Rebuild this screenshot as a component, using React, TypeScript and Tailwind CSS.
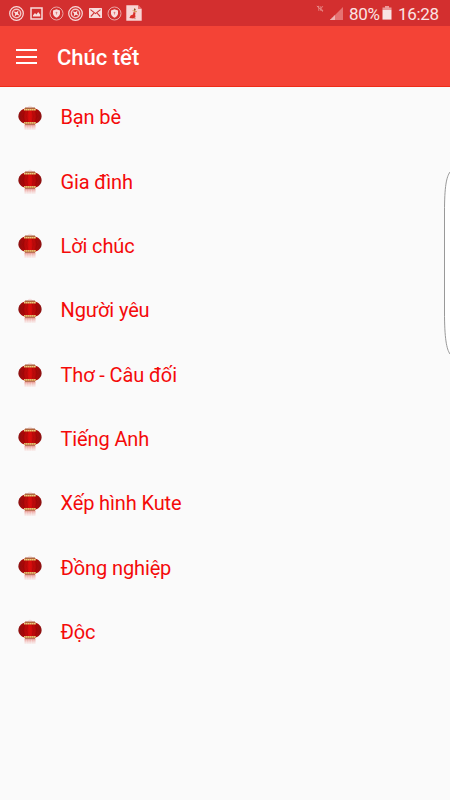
import React from 'react';

interface IconProps {
  className?: string;
}

const CATEGORIES = [
  'Bạn bè',
  'Gia đình',
  'Lời chúc',
  'Người yêu',
  'Thơ - Câu đối',
  'Tiếng Anh',
  'Xếp hình Kute',
  'Đồng nghiệp',
  'Độc',
];

const CompassIcon: React.FC<IconProps> = ({ className }) => (
  <svg viewBox="0 0 15 15" className={className} fill="none">
    <circle cx="7.5" cy="7.5" r="6.8" stroke="#f8dcdc" strokeWidth="1.2" />
    <circle cx="7.5" cy="7.5" r="4.2" stroke="#f3c4c4" strokeWidth="1.5" />
    <path d="M4.6 5.6 7.6 6 9.4 4.4 9 7.2 10.8 9.8 7.8 8.8 5.6 10.4 6.2 7.8Z" fill="#f8dcdc" />
  </svg>
);

const ShieldIcon: React.FC<IconProps> = ({ className }) => (
  <svg viewBox="0 0 15 15" className={className} fill="none">
    <circle cx="7.5" cy="7.5" r="6.5" stroke="#eba5a5" strokeWidth="1" />
    <path d="M7.5 3.3 11 4.4V7.2C11 9.4 9.4 10.8 7.5 11.8 5.6 10.8 4 9.4 4 7.2V4.4Z" fill="#f8dcdc" />
    <circle cx="7.5" cy="6.6" r="0.9" fill="#e07878" />
    <path d="M7.5 6.9V8.6" stroke="#e07878" strokeWidth="0.8" />
  </svg>
);

const PictureIcon: React.FC<IconProps> = ({ className }) => (
  <svg viewBox="0 0 13 13" className={className} fill="none">
    <rect x="1" y="1" width="11" height="11" stroke="#f8dcdc" strokeWidth="1.5" />
    <path d="M3 9.4V8.2L5 6 6.4 7.4 8.2 5 10.2 7.6V9.4Z" fill="#f8dcdc" />
  </svg>
);

const MailIcon: React.FC<IconProps> = ({ className }) => (
  <svg viewBox="0 0 13 10" className={className} fill="none">
    <rect width="13" height="10" rx="0.6" fill="#f8dcdc" />
    <path d="M1.5 1.6 6.5 5.6 11.5 1.6M1.8 8.5 4.9 5.2M11.2 8.5 8.1 5.2" stroke="#cf3535" strokeWidth="1.1" />
  </svg>
);

const NoteIcon: React.FC<IconProps> = ({ className }) => (
  <svg viewBox="0 0 16 16" className={className} fill="none">
    <path d="M0.3 0.3H12L15.7 4V15.7H0.3Z" fill="#f8d4d4" />
    <path d="M12 0.3V4H15.7Z" fill="#e57373" />
    <path d="M7.5 7 9.6 7.4 9.2 9.4 9.5 12.2 7.2 13.4 3.4 13 4.6 10.6 7 9.4Z" fill="#d8302a" />
    <path d="M8.6 3V7.2M6.6 5.6 11 6.8" stroke="#d79a5b" strokeWidth="1" />
    <circle cx="8.8" cy="4.6" r="0.9" fill="#8a4a30" />
    <path d="M8.2 13.6H9.6" stroke="#a06a50" strokeWidth="0.7" />
  </svg>
);

const MutedIcon: React.FC<IconProps> = ({ className }) => (
  <svg viewBox="0 0 8 8" className={className} fill="none" stroke="#e88a88" strokeWidth="0.9">
    <path d="M0.8 1 7 6.6M2.8 0.8V5.8M4.8 1.2V5.8M6.8 1.2 5 3.5 7 6M1 1.5H2.8" />
  </svg>
);

const SignalIcon: React.FC<IconProps> = ({ className }) => (
  <svg viewBox="0 0 13 13" className={className}>
    <path d="M0 13 13 0V13Z" fill="#e57373" />
    <path d="M0 13 5 8V13Z" fill="#f8dcdc" />
    <path d="M2 10V13M4 8V13" stroke="#d65353" strokeWidth="0.6" />
  </svg>
);

const BatteryIcon: React.FC<IconProps> = ({ className }) => (
  <svg viewBox="0 0 10 14" className={className}>
    <path d="M3 0H7V1.4H9.5V3.6H0.5V1.4H3Z" fill="#ec9999" />
    <path d="M0.5 3.6H9.5V13.6H0.5Z" fill="#f8e4e4" />
  </svg>
);

const LanternIcon: React.FC<IconProps> = ({ className }) => (
  <svg viewBox="0 0 24 25" className={className} fill="none">
    <defs>
      <linearGradient id="lanternBody" x1="0" x2="1" y1="0" y2="0">
        <stop offset="0" stopColor="#8a1212" />
        <stop offset="0.2" stopColor="#a80808" />
        <stop offset="0.5" stopColor="#dc0d0d" />
        <stop offset="0.8" stopColor="#a80808" />
        <stop offset="1" stopColor="#8a1212" />
      </linearGradient>
      <linearGradient id="lanternTassel" x1="0" x2="0" y1="0" y2="1">
        <stop offset="0" stopColor="#e8867f" />
        <stop offset="1" stopColor="#f6d3d0" stopOpacity="0.3" />
      </linearGradient>
    </defs>
    <path d="M9.8 2.8C10 0.8 14 0.8 14.2 2.8" stroke="#f4caca" strokeWidth="0.7" />
    <path d="M6.5 19.5H17.5V25H6.5Z" fill="url(#lanternTassel)" />
    <path d="M8.3 20.5V25M10.9 20.5V25M13.5 20.5V25M16 20.5V25" stroke="#fafafa" strokeOpacity="0.5" strokeWidth="0.6" />
    <path d="M7 3.6H17C20.6 4.6 23.6 7.4 23.6 11.3S20.6 17.8 17 18.8H7C3.4 17.8 0.4 15.2 0.4 11.3S3.4 4.6 7 3.6Z" fill="url(#lanternBody)" />
    <path d="M6.6 6Q3.6 11.3 6.6 16.6M9.6 6Q8 11.3 9.6 16.6M14.4 6Q16 11.3 14.4 16.6M17.4 6Q20.4 11.3 17.4 16.6" stroke="#780808" strokeOpacity="0.5" strokeWidth="0.55" />
    <path d="M7 2.4H17V4H7ZM7 18.2H17V19.8H7Z" fill="#a85a3a" />
    <path d="M6 4.6H18M6 17.9H18" stroke="#c9873f" strokeWidth="1.6" />
    <path d="M6 4.6H18M6 17.9H18" stroke="#ecca86" strokeWidth="1.4" strokeDasharray="1.4 0.6" />
  </svg>
);

const StatusBar: React.FC = () => (
  <div className="h-[26px] bg-[#d32f2f] flex items-center justify-between pl-[9px] pr-[12px]">
    <div className="flex items-center">
      <CompassIcon className="w-[15px] h-[15px]" />
      <PictureIcon className="w-[13px] h-[13px] ml-[6px]" />
      <ShieldIcon className="w-[15px] h-[15px] ml-[6px]" />
      <CompassIcon className="w-[15px] h-[15px] ml-[4px]" />
      <MailIcon className="w-[13px] h-[10px] ml-[6px]" />
      <ShieldIcon className="w-[15px] h-[15px] ml-[5px]" />
      <NoteIcon className="w-[16px] h-[16px] ml-[4px]" />
    </div>
    <div className="flex items-center text-[#fae3e3] text-[17px] leading-[26px] tracking-[-0.3px] whitespace-nowrap">
      <MutedIcon className="w-[8px] h-[8px] mb-[8px]" />
      <SignalIcon className="w-[13px] h-[13px] ml-[6px]" />
      <span className="w-[31px] ml-[6px] pt-[1px]">80%</span>
      <BatteryIcon className="w-[10px] h-[14px] ml-[2px]" />
      <span className="w-[40px] ml-[6px] pt-[1px]">16:28</span>
    </div>
  </div>
);

const Toolbar: React.FC = () => (
  <header className="h-[61px] bg-[#f44336] border-b border-[#ee2c18] flex items-center pl-4">
    <button aria-label="Menu" className="w-[21px] flex flex-col gap-[4.5px] pt-px">
      <span className="h-[2px] bg-white" />
      <span className="h-[2px] bg-white" />
      <span className="h-[2px] bg-white" />
    </button>
    <h1 className="ml-5 pt-[3px] text-[22px] font-medium text-white">Chúc tết</h1>
  </header>
);

const App: React.FC = () => {
  return (
    <div className="relative w-[450px] h-[800px] overflow-hidden bg-[#fafafa] font-['Roboto',sans-serif]">
      <StatusBar />
      <Toolbar />
      <ul className="-mt-[2px]">
        {CATEGORIES.map((name) => (
          <li key={name} className="h-[64.35px] flex items-center pl-[18px]">
            <LanternIcon className="w-[24px] h-[25px]" />
            <span className="ml-[18.5px] text-[20px] tracking-[-0.12px] text-[#f40a0a]">{name}</span>
          </li>
        ))}
      </ul>
      {/* edge panel handle, mostly off screen */}
      <svg viewBox="0 0 7 186" className="absolute right-0 top-[170px] w-[7px] h-[186px]" fill="none">
        <path d="M7 2C3.5 7 1.5 16 1.5 42V142C1.5 168 3.5 179 7 184" fill="#ffffff" stroke="#999999" strokeWidth="1" />
      </svg>
    </div>
  );
};

export default App;
